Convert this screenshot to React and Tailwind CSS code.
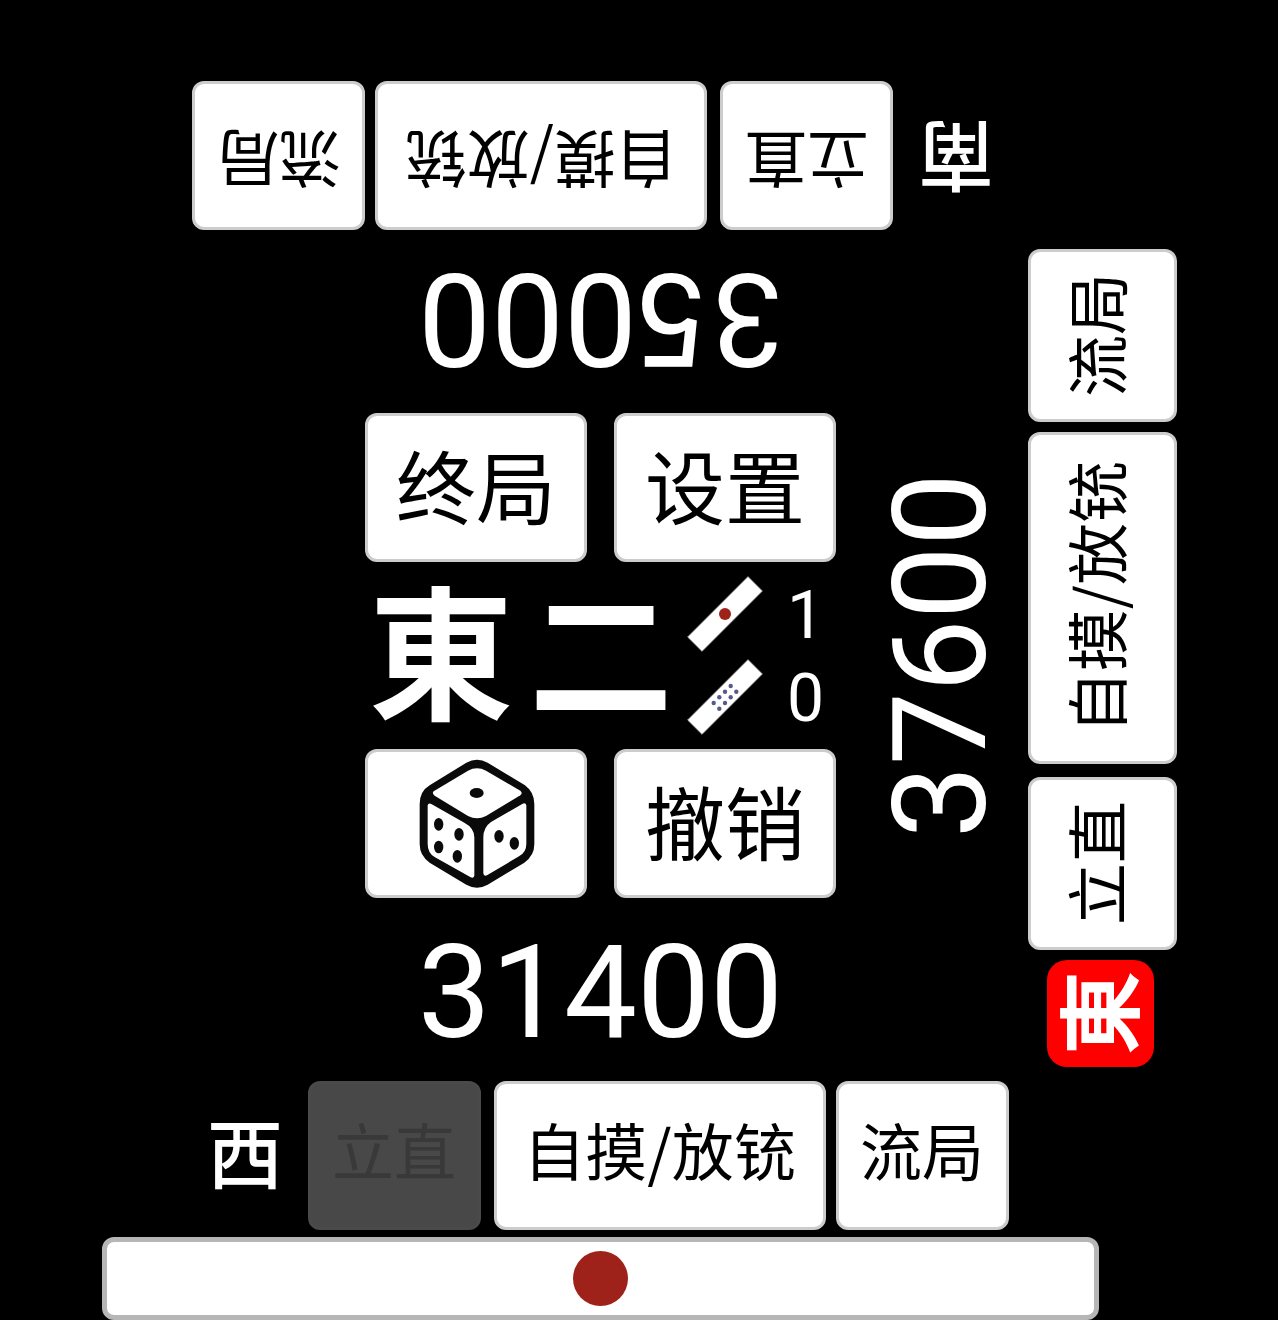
const BUTTON =
  'flex shrink-0 items-center justify-center rounded-xl border-3 border-[#cccccc] bg-white text-black ' +
  'disabled:border-[#4a4a4a] disabled:bg-[#484848] disabled:text-[#393939]';

const SIDEWAYS = '[writing-mode:vertical-rl] [text-orientation:sideways] rotate-180';

function PlayerRow({ wind, riichi = false, className = '' }) {
  return (
    <section className={`flex items-center justify-center ${className}`}>
      <div className="mr-2.5 flex w-[105px] justify-center pb-3 text-[76px] leading-none font-medium text-white">
        {wind}
      </div>
      <button disabled={riichi} className={`${BUTTON} mr-[13px] h-[149px] w-[173px] pb-3.5 text-[62px] leading-none`}>
        立直
      </button>
      <button className={`${BUTTON} mr-2.5 h-[149px] w-[332px] pb-3.5 text-[62px] leading-none`}>自摸/放铳</button>
      <button className={`${BUTTON} h-[149px] w-[173px] pb-3.5 text-[62px] leading-none`}>流局</button>
    </section>
  );
}

function PlayerColumn({ wind, className = '' }) {
  return (
    <section className={`flex flex-col-reverse items-center justify-center ${className}`}>
      <div className="mt-2.5 mr-1 flex size-[107px] items-center justify-center rounded-[20px] bg-[#ff0000] pr-2.5 text-[84px] leading-none font-bold text-white">
        <span className={SIDEWAYS}>{wind}</span>
      </div>
      <button className={`${BUTTON} mt-[13px] h-[173px] w-[149px] pr-4 text-[62px] leading-none`}>
        <span className={SIDEWAYS}>立直</span>
      </button>
      <button className={`${BUTTON} mt-2.5 h-[332px] w-[149px] pr-4 text-[62px] leading-none`}>
        <span className={SIDEWAYS}>自摸/放铳</span>
      </button>
      <button className={`${BUTTON} h-[173px] w-[149px] pr-4 text-[62px] leading-none`}>
        <span className={SIDEWAYS}>流局</span>
      </button>
    </section>
  );
}

function Score({ value, className = '' }) {
  return (
    <div className={`pt-[7px] text-center font-[Roboto,sans-serif] text-[130px] leading-[176px] text-white ${className}`}>
      {value}
    </div>
  );
}

function StickIcon({ children }) {
  return (
    <svg viewBox="0 0 76 76" className="size-[76px]" aria-hidden="true">
      <path d="M61 0.7 75.3 15 15 75.3 0.7 61Z" fill="#fff" stroke="#b8b0b0" strokeWidth="1" />
      {children}
    </svg>
  );
}

function StickCount({ count, children }) {
  return (
    <div className="flex items-center">
      <StickIcon>{children}</StickIcon>
      <span className="ml-3 w-[61px] pt-1 text-center font-[Roboto,sans-serif] text-[66px] leading-none text-white">
        {count}
      </span>
    </div>
  );
}

const DOTS = [
  [43.7, 27], [38, 32.7], [32.3, 38.3], [26.7, 44],
  [49.3, 32.7], [43.7, 38.3], [38, 44], [32.3, 49.7],
];

function DiceIcon() {
  return (
    <svg viewBox="178 55 348 387" className="ml-0.5 h-[129px] w-[116px]" aria-hidden="true">
      <path
        fill="#0a0a0a"
        d="M320 66Q352 48 384 66L496 134Q524 155 524 190V310Q524 345 494 366L384 432Q352 450 320 432L210 366Q180 345 180 310V190Q180 152 210 134Z"
      />
      <g fill="#fff">
        <path d="M222 152Q216 158 225 165L325 226Q352 240 379 226L482 164Q490 157 482 150L379 90Q352 76 325 90Z" />
        <path d="M204 194Q206 186 215 190L314 246Q344 262 344 290V405Q342 414 333 410L226 350Q204 338 204 310Z" />
        <path d="M500 194Q498 185 489 189L394 244Q371 260 371 290V398Q372 408 382 404L478 347Q500 335 500 310Z" />
      </g>
      <g fill="#0a0a0a">
        <ellipse cx="351" cy="157" rx="21" ry="15" />
        <ellipse cx="237" cy="251" rx="14" ry="19" />
        <ellipse cx="298" cy="281" rx="14" ry="19" />
        <ellipse cx="237" cy="319" rx="14" ry="19" />
        <ellipse cx="293" cy="347" rx="14" ry="19" />
        <ellipse cx="418" cy="287" rx="14" ry="19" />
        <ellipse cx="464" cy="308" rx="14" ry="19" />
      </g>
    </svg>
  );
}

function Center() {
  return (
    <section className="col-start-1 col-end-3 row-start-3 flex w-[471px] flex-col justify-self-center">
      <div className="flex justify-between">
        <button className={`${BUTTON} h-[149px] w-[222px] pb-2.5 text-[80px] leading-none`}>终局</button>
        <button className={`${BUTTON} h-[149px] w-[222px] pb-2.5 text-[80px] leading-none`}>设置</button>
      </div>
      <div className="flex h-[187px] items-center justify-between">
        <div className="flex gap-4 pb-5 pl-1 text-[144px] leading-none font-bold text-white">
          <span>東</span>
          <span>二</span>
        </div>
        <div className="flex flex-col gap-[7px]">
          <StickCount count={1}>
            <circle cx="38" cy="38" r="6" fill="#9e2219" />
          </StickCount>
          <StickCount count={0}>
            {DOTS.map(([x, y]) => (
              <circle key={`${x}-${y}`} cx={x} cy={y} r="2.2" fill="#555a8c" />
            ))}
          </StickCount>
        </div>
      </div>
      <div className="flex justify-between">
        <button aria-label="骰子" className={`${BUTTON} h-[149px] w-[222px]`}>
          <DiceIcon />
        </button>
        <button className={`${BUTTON} h-[149px] w-[222px] pb-2.5 text-[80px] leading-none`}>撤销</button>
      </div>
    </section>
  );
}

export default function App() {
  return (
    <main
      lang="zh-CN"
      className="min-h-screen bg-black pt-[81px] pr-[101px] pl-[102px] font-normal font-['Noto_Sans_CJK_SC',sans-serif]"
    >
      <div className="grid grid-cols-[1fr_71px_78px]">
        <PlayerRow wind="南" className="col-start-1 col-end-3 row-start-1 rotate-180" />
        <Score value="35000" className="col-start-1 col-end-3 row-start-2 rotate-180" />
        <Center />
        <div className="col-start-1 row-start-2 row-end-5 mr-[22px] flex items-center justify-self-end font-[Roboto,sans-serif] text-[130px] leading-none text-white">
          <span className={SIDEWAYS}>37600</span>
        </div>
        <PlayerColumn wind="東" className="col-start-2 col-end-4 row-start-2 row-end-5 pt-1" />
        <Score value="31400" className="col-start-1 col-end-3 row-start-4" />
        <PlayerRow wind="西" riichi className="col-start-1 col-end-3 row-start-5" />
        <div className="col-start-1 col-end-3 row-start-6 mt-[7px] flex h-[83px] items-center justify-center rounded-xl border-5 border-[#b6b6b6] bg-white">
          <div className="size-[55px] rounded-full bg-[#9e2219]" />
        </div>
      </div>
    </main>
  );
}
